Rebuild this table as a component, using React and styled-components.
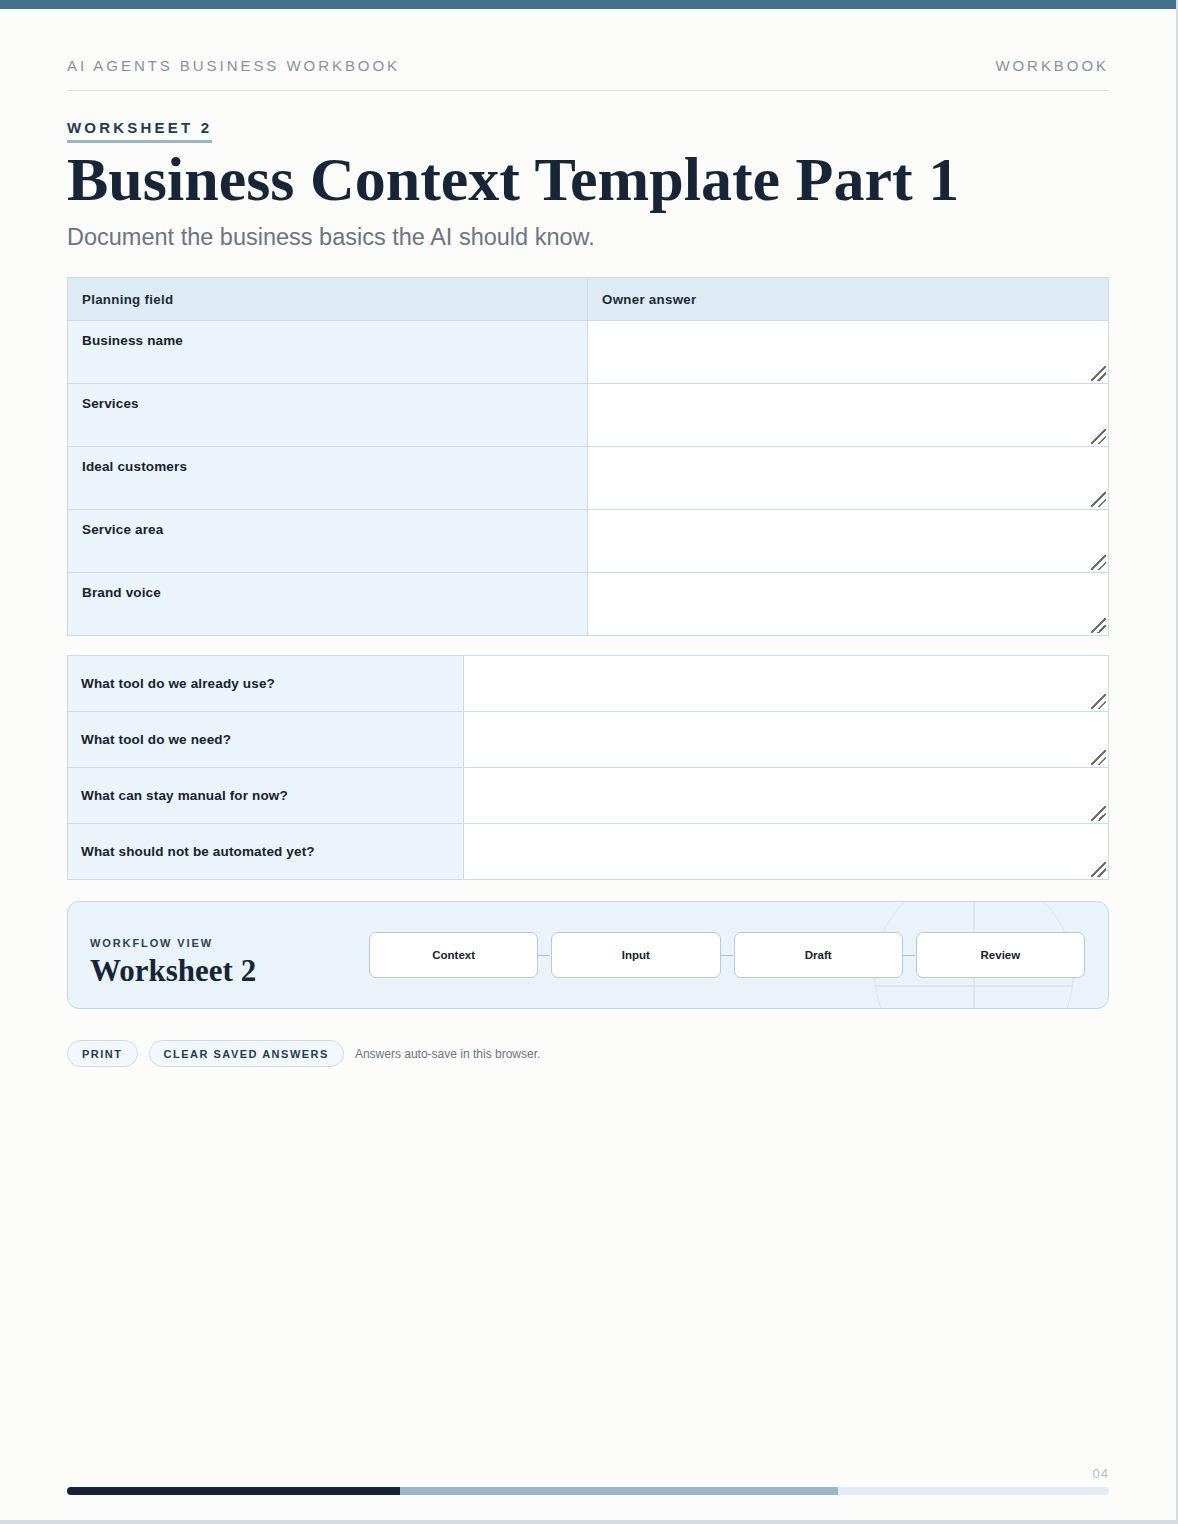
import React from 'react';
import styled, { createGlobalStyle } from 'styled-components';

const GlobalStyle = createGlobalStyle`
  html, body {
    margin: 0;
    padding: 0;
    background: #d6dbe2;
  }
  body {
    font-family: "Liberation Sans", Arial, sans-serif;
    color: #17222f;
  }
  * {
    box-sizing: border-box;
  }
`;

const Page = styled.div`
  width: 1176px;
  height: 1520px;
  background: #fcfcfa;
  border-top: 9px solid #41708f;
  padding: 48px 67px 25px;
  display: flex;
  flex-direction: column;
`;

const RunningHead = styled.header`
  display: flex;
  justify-content: space-between;
  padding-bottom: 16px;
  border-bottom: 1px solid #dfe1ea;
  font-size: 15px;
  line-height: 17px;
  letter-spacing: 2.95px;
  text-transform: uppercase;
  color: #8a919b;
`;

const Eyebrow = styled.div`
  align-self: flex-start;
  margin-top: 28px;
  padding-bottom: 4px;
  border-bottom: 3px solid #9ab6c8;
  font-size: 15px;
  line-height: 17px;
  font-weight: 700;
  letter-spacing: 3.2px;
  color: #1f3b55;
`;

const Title = styled.h1`
  margin: 4px 0 0;
  font-family: "Liberation Serif", "Times New Roman", serif;
  font-size: 62px;
  line-height: 64px;
  font-weight: 700;
  color: #172536;
`;

const Lede = styled.p`
  margin: 12px 0 0;
  font-size: 23.5px;
  line-height: 28px;
  color: #6b7480;
`;

const Grid = styled.div`
  display: grid;
  grid-template-columns: ${(p) => p.columns};
  margin-top: ${(p) => p.gap}px;
  border: 1px solid #cddbe6;
  border-bottom: 0;
`;

const HeadCell = styled.div`
  height: 43px;
  display: flex;
  align-items: center;
  padding: 0 14px;
  background: #deebf4;
  border-bottom: 1px solid #cddbe6;
  border-right: ${(p) => (p.first ? '1px solid #cddbe6' : '0')};
  font-size: 13.3px;
  font-weight: 700;
  letter-spacing: 0.3px;
  color: #1f2a37;
`;

const LabelCell = styled.div`
  height: ${(p) => p.height}px;
  display: flex;
  align-items: ${(p) => (p.centered ? 'center' : 'flex-start')};
  padding: ${(p) => (p.centered ? '0 13px' : '12px 14px 0')};
  background: #ebf4fa;
  border-bottom: 1px solid #cddbe6;
  border-right: 1px solid #cddbe6;
  font-size: 13.5px;
  line-height: 15px;
  font-weight: 700;
  letter-spacing: 0.15px;
  color: #17222f;
`;

const AnswerCell = styled.div`
  position: relative;
  height: ${(p) => p.height}px;
  background: #fff;
  border-bottom: 1px solid #cddbe6;

  &::after {
    content: '';
    position: absolute;
    right: 2px;
    bottom: 2px;
    width: 15px;
    height: 15px;
    pointer-events: none;
    background: linear-gradient(
      135deg,
      transparent 46%,
      #6e6e6e 46%,
      #6e6e6e 54%,
      transparent 54%,
      transparent 70%,
      #6e6e6e 70%,
      #6e6e6e 78%,
      transparent 78%
    );
  }
`;

const Answer = styled.textarea`
  display: block;
  width: 100%;
  height: 100%;
  margin: 0;
  padding: 10px 14px;
  border: 0;
  outline: none;
  resize: none;
  background: #fff;
  font-family: "Liberation Sans", Arial, sans-serif;
  font-size: 13px;
  color: #17222f;
`;

const Panel = styled.section`
  position: relative;
  overflow: hidden;
  margin-top: 21px;
  height: 108px;
  display: grid;
  grid-template-columns: 279px 1fr;
  align-items: center;
  padding: 0 23px 0 22px;
  background: #eaf3fa;
  border: 1px solid #c3d6e4;
  border-radius: 12px;
`;

const Backdrop = styled.svg`
  position: absolute;
  left: 806px;
  top: -29px;
  width: 200px;
  height: 200px;
`;

const PanelHead = styled.div`
  position: relative;
  display: flex;
  flex-direction: column;
  gap: 4px;
  margin-top: 14px;
`;

const Kicker = styled.div`
  font-size: 11px;
  line-height: 13px;
  font-weight: 700;
  letter-spacing: 1.9px;
  color: #2b3f55;
`;

const PanelTitle = styled.div`
  font-family: "Liberation Serif", "Times New Roman", serif;
  font-size: 31px;
  line-height: 34px;
  font-weight: 700;
  color: #172536;
`;

const Steps = styled.div`
  position: relative;
  display: grid;
  grid-template-columns: repeat(4, 1fr);
  gap: 13px;
`;

const Step = styled.div`
  position: relative;
  height: 46px;
  display: flex;
  align-items: center;
  justify-content: center;
  background: #fff;
  border: 1px solid #b4c9d9;
  border-radius: 7px;
  font-size: 11.5px;
  font-weight: 700;
  color: #17222f;

  &:not(:last-child)::after {
    content: '';
    position: absolute;
    left: 100%;
    top: 50%;
    width: 13px;
    height: 1px;
    background: #a9c0d1;
  }
`;

const Actions = styled.div`
  display: flex;
  align-items: center;
  gap: 11px;
  margin-top: 31px;
`;

const Pill = styled.button`
  height: 27px;
  padding: 0 14px;
  border: 1px solid #c9dbe7;
  border-radius: 14px;
  background: #f3f8fc;
  font-family: "Liberation Sans", Arial, sans-serif;
  font-size: 11px;
  font-weight: 700;
  letter-spacing: 1.5px;
  color: #1f3b55;
  cursor: pointer;
`;

const Note = styled.span`
  font-size: 12px;
  color: #6b7480;
`;

const Footer = styled.footer`
  margin-top: auto;
  display: flex;
  flex-direction: column;
  gap: 6px;
`;

const PageNumber = styled.div`
  text-align: right;
  font-size: 13px;
  line-height: 15px;
  letter-spacing: 1px;
  color: #b8bec6;
`;

const Progress = styled.div`
  display: flex;
  height: 8px;
  border-radius: 4px;
  overflow: hidden;
  background: #e3ecf4;
`;

const Segment = styled.div`
  background: ${(p) => p.color};
`;

const basics = ['Business name', 'Services', 'Ideal customers', 'Service area', 'Brand voice'];
const tools = [
  'What tool do we already use?',
  'What tool do we need?',
  'What can stay manual for now?',
  'What should not be automated yet?',
];
const flow = ['Context', 'Input', 'Draft', 'Review'];
const progress = [
  { color: '#162435', width: 32 },
  { color: '#9ab6c8', width: 42 },
];

export default function App() {
  return (
    <>
      <GlobalStyle />
      <Page>
        <RunningHead>
          <span>AI Agents Business Workbook</span>
          <span>Workbook</span>
        </RunningHead>

        <Eyebrow>WORKSHEET 2</Eyebrow>
        <Title>Business Context Template Part 1</Title>
        <Lede>Document the business basics the AI should know.</Lede>

        <Grid columns="1fr 1fr" gap={26}>
          <HeadCell first>Planning field</HeadCell>
          <HeadCell>Owner answer</HeadCell>
          {basics.map((label) => (
            <React.Fragment key={label}>
              <LabelCell height={63}>{label}</LabelCell>
              <AnswerCell height={63}>
                <Answer aria-label={label} />
              </AnswerCell>
            </React.Fragment>
          ))}
        </Grid>

        <Grid columns="396px 1fr" gap={19}>
          {tools.map((label) => (
            <React.Fragment key={label}>
              <LabelCell height={56} centered>
                {label}
              </LabelCell>
              <AnswerCell height={56}>
                <Answer aria-label={label} />
              </AnswerCell>
            </React.Fragment>
          ))}
        </Grid>

        <Panel>
          <Backdrop viewBox="0 0 200 200" aria-hidden="true">
            <circle cx="100" cy="100" r="99.5" fill="none" stroke="#d4e3ee" strokeWidth="1" />
            <line x1="100" y1="0" x2="100" y2="200" stroke="#d4e3ee" strokeWidth="1.5" />
            <line x1="1" y1="113" x2="199" y2="113" stroke="#d4e3ee" strokeWidth="1.5" />
          </Backdrop>
          <PanelHead>
            <Kicker>WORKFLOW VIEW</Kicker>
            <PanelTitle>Worksheet 2</PanelTitle>
          </PanelHead>
          <Steps>
            {flow.map((step) => (
              <Step key={step}>{step}</Step>
            ))}
          </Steps>
        </Panel>

        <Actions>
          <Pill type="button">PRINT</Pill>
          <Pill type="button">CLEAR SAVED ANSWERS</Pill>
          <Note>Answers auto-save in this browser.</Note>
        </Actions>

        <Footer>
          <PageNumber>04</PageNumber>
          <Progress>
            {progress.map((s) => (
              <Segment key={s.color} color={s.color} style={{ width: `${s.width}%` }} />
            ))}
          </Progress>
        </Footer>
      </Page>
    </>
  );
}
